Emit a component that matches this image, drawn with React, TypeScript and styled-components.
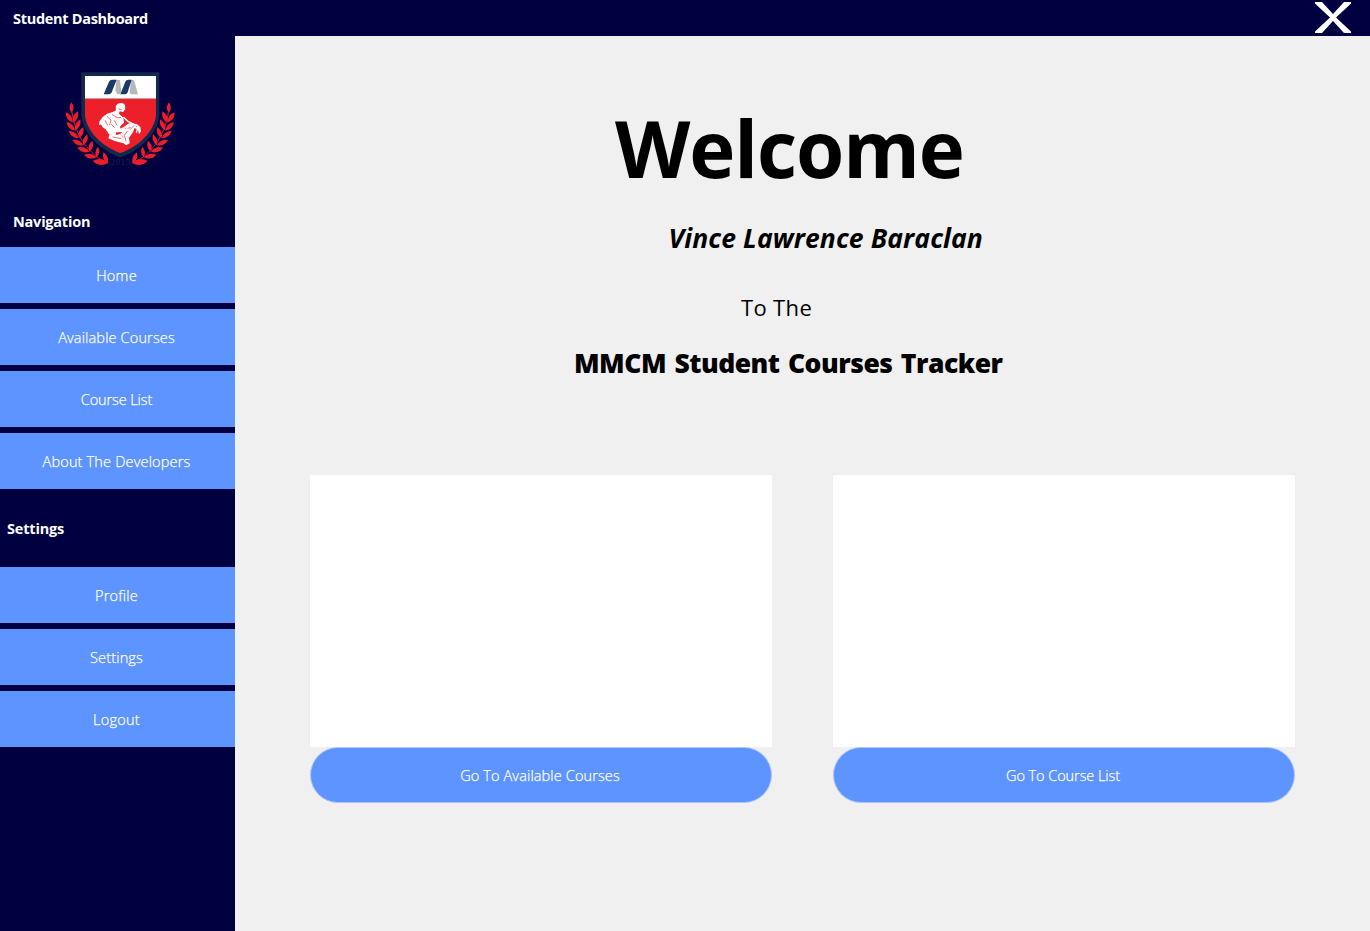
import React from "react";
import styled, { createGlobalStyle } from "styled-components";

const GlobalStyle = createGlobalStyle`
  * { box-sizing: border-box; }
  body { margin: 0; background: #f0f0f0; font-family: "Open Sans", "Noto Sans", sans-serif; }
`;

const Window = styled.div`
  display: flex;
  flex-direction: column;
  width: 1370px;
  height: 931px;
  overflow: hidden;
  background: #f0f0f0;
`;

const TitleBar = styled.header`
  flex: none;
  display: flex;
  align-items: center;
  justify-content: space-between;
  height: 36px;
  padding: 0 18px 0 13px;
  background: #000040;
`;

const Heading = styled.h2<{ $spacing: number }>`
  margin: 0;
  color: #fff;
  font-size: 14.5px;
  line-height: 20px;
  font-weight: 700;
  letter-spacing: ${(p) => p.$spacing}px;
  white-space: nowrap;
`;

const WindowTitle = styled(Heading)`
  padding-top: 1px;
`;

const CloseButton = styled.button`
  display: flex;
  padding: 0 0 1px;
  border: 0;
  background: none;
`;

const Body = styled.div`
  flex: 1;
  display: flex;
  min-height: 0;
`;

const Sidebar = styled.aside`
  flex: none;
  width: 235px;
  background: #000040;
`;

const LogoArea = styled.div`
  height: 176px;
  padding: 29px 0 0 60px;
`;

const SectionTitle = styled.div<{ $top: number; $bottom: number; $left: number }>`
  padding: ${(p) => `${p.$top}px 0 ${p.$bottom}px ${p.$left}px`};
`;

const Menu = styled.nav`
  display: flex;
  flex-direction: column;
  gap: 6px;
`;

const Button = styled.button<{ $spacing: number }>`
  height: 56px;
  padding: 0 2px 0 0;
  border: 0;
  background: #5e94ff;
  color: #fff;
  font-family: inherit;
  font-size: 14.5px;
  font-weight: 300;
  -webkit-text-stroke: 0.25px #fff;
  letter-spacing: ${(p) => p.$spacing}px;
`;

const PillButton = styled(Button)`
  display: block;
  width: 100%;
  border: 1px solid #aac6fa;
  border-radius: 28px;
`;

const Main = styled.main`
  flex: 1;
  padding: 62px 75px 0;
`;

const Line = styled.p<{
  $size: number;
  $height: number;
  $left: number;
  $weight?: number;
  $italic?: boolean;
  $spacing?: number;
  $wordSpacing?: number;
}>`
  margin: 0;
  padding-left: ${(p) => p.$left}px;
  color: #000;
  font-size: ${(p) => p.$size}px;
  line-height: ${(p) => p.$height}px;
  font-weight: ${(p) => p.$weight ?? 400};
  font-style: ${(p) => (p.$italic ? "italic" : "normal")};
  letter-spacing: ${(p) => p.$spacing ?? 0}px;
  word-spacing: ${(p) => p.$wordSpacing ?? 0}px;
  white-space: nowrap;
`;

const Cards = styled.section`
  display: flex;
  gap: 61px;
  margin-top: 85px;
`;

const Card = styled.div`
  width: 462px;
`;

const Preview = styled.div`
  height: 272px;
  background: #fff;
`;

/* Each leaf runs from its base on the stem to its tip. */
const leaves: [number, number, number, number][] = [
  [35, 144, 34, 112],
  [38, 172, 17, 142],
  [38, 174, 54, 139],
  [45, 197, 19, 171],
  [45, 197, 61, 163],
  [56, 220, 26, 198],
  [56, 220, 70, 186],
  [70, 241, 37, 225],
  [70, 241, 82, 208],
  [88, 260, 52, 248],
  [88, 260, 97, 227],
  [110, 277, 72, 270],
  [110, 277, 114, 245],
  [145, 294, 98, 288],
  [143, 295, 130, 262],
];

const leafPath = ([x, y, tx, ty]: [number, number, number, number]) => {
  const mx = (x + tx) / 2;
  const my = (y + ty) / 2;
  const nx = (ty - y) * 0.36;
  const ny = (x - tx) * 0.36;
  return `M${x} ${y}Q${mx + nx} ${my + ny} ${tx} ${ty}Q${mx - nx} ${my - ny} ${x} ${y}Z`;
};

const Laurel = ({ mirrored = false }: { mirrored?: boolean }) => (
  <g transform={mirrored ? "translate(361 0) scale(-1 1)" : undefined}>
    <path d="M36 140C42 195 75 260 138 293" fill="none" stroke="#d41c2c" strokeWidth="3" />
    {leaves.map((leaf) => (
      <path key={leaf.join()} d={leafPath(leaf)} fill="#ef1d29" />
    ))}
  </g>
);

const Crest = () => (
  <svg width="120" height="105" viewBox="0 0 360 315" aria-label="MMCM">
    <Laurel />
    <Laurel mirrored />
    <path d="M64 22H298V150C296 200 246 256 181 277C116 256 66 200 64 150Z" fill="#12284d" />
    <path d="M75 33H288V101H75Z" fill="#fff" />
    <path d="M75 101H288V150C285 195 240 244 181 264C122 244 78 195 75 150Z" fill="#ed1f2b" />
    <path d="M169 45H180L184 82L178 88H172L166 76Z" fill="#b5b8bb" />
    <path d="M213 45H218Q222 45 224 52L234 88H216Q210 88 209 80Z" fill="#b5b8bb" />
    <path d="M131 88L147 50Q150 44 156 44H170L155 82Q152 88 147 88Z" fill="#173b66" />
    <path d="M181 88L196 50Q199 44 205 44H215L203 82Q200 88 195 88Z" fill="#173b66" />
    <g fill="#fff">
      <path d="M167 124C171 112 191 110 195 121L196 133L189 141L179 139L177 146L190 158L192 173L181 183L180 193L170 199L166 211L147 208L139 196L136 183L128 178L117 179L119 168L128 156L141 146L158 141L168 136Z" />
      <path d="M119 171L132 178L148 190L170 195L190 187L207 175L230 177L241 186L243 199L237 208L234 194L224 189L218 203L207 218L209 235L198 241L190 235L164 228L145 220L149 208L174 209L190 201L174 202L148 200L128 187Z" />
    </g>
    <g fill="none" stroke="#ed1f2b" strokeWidth="2" strokeLinecap="round">
      <path d="M176 132L183 134M142 155L153 165L149 179M157 149L171 158L182 158M163 167L171 180M154 178L163 187M136 167L142 180" />
      <path d="M195 191L211 188M202 199L193 211L198 228M159 216L183 221M211 193L222 182M181 207L190 216M228 184L232 188" />
    </g>
    <g fill="none" stroke="#fff" strokeWidth="4">
      <path d="M190 156L204 169L224 179M208 181L181 213M234 183L229 204" />
    </g>
    <text
      x="181"
      y="299"
      fill="#14284c"
      fontFamily="Liberation Serif, serif"
      fontSize="26"
      textAnchor="middle"
      textLength="58"
    >
      2015
    </text>
  </svg>
);

const navigation: [string, number][] = [
  ["Home", 0.25],
  ["Available Courses", 0.15],
  ["Course List", -0.1],
  ["About The Developers", 0.17],
];

const settings: [string, number][] = [
  ["Profile", 0.2],
  ["Settings", 0.15],
  ["Logout", 0.25],
];

const MenuList = ({ items }: { items: [string, number][] }) => (
  <Menu>
    {items.map(([label, spacing]) => (
      <Button key={label} $spacing={spacing}>
        {label}
      </Button>
    ))}
  </Menu>
);

export default function App() {
  return (
    <Window>
      <GlobalStyle />
      <TitleBar>
        <WindowTitle as="h1" $spacing={-0.3}>Student Dashboard</WindowTitle>
        <CloseButton aria-label="Close">
          <svg width="38" height="31" viewBox="0 0 38 31">
            <path
              d="M1 0H8L19 12L30 0H37V1.5L22 15.5L37 29.5V31H30L19 19L8 31H1V29.5L16 15.5L1 1.5Z"
              fill="#fff"
            />
          </svg>
        </CloseButton>
      </TitleBar>
      <Body>
        <Sidebar>
          <LogoArea>
            <Crest />
          </LogoArea>
          <SectionTitle $top={0} $bottom={15} $left={13}>
            <Heading $spacing={-0.22}>Navigation</Heading>
          </SectionTitle>
          <MenuList items={navigation} />
          <SectionTitle $top={30} $bottom={28} $left={7}>
            <Heading $spacing={-0.18}>Settings</Heading>
          </SectionTitle>
          <MenuList items={settings} />
        </Sidebar>
        <Main>
          <Line as="h1" $size={78} $height={100} $left={305} $weight={700} $spacing={-1.1}>
            Welcome
          </Line>
          <Line $size={26.5} $height={80} $left={358.5} $weight={700} $spacing={0.1} $italic>
            Vince Lawrence Baraclan
          </Line>
          <Line $size={22} $height={58} $left={431} $spacing={0.35}>
            To The
          </Line>
          <Line
            $size={26.5}
            $height={54}
            $left={264}
            $weight={800}
            $spacing={-0.5}
            $wordSpacing={2}
          >
            MMCM Student Courses Tracker
          </Line>
          <Cards>
            <Card>
              <Preview />
              <PillButton $spacing={0.13}>Go To Available Courses</PillButton>
            </Card>
            <Card>
              <Preview />
              <PillButton $spacing={-0.07}>Go To Course List</PillButton>
            </Card>
          </Cards>
        </Main>
      </Body>
    </Window>
  );
}
